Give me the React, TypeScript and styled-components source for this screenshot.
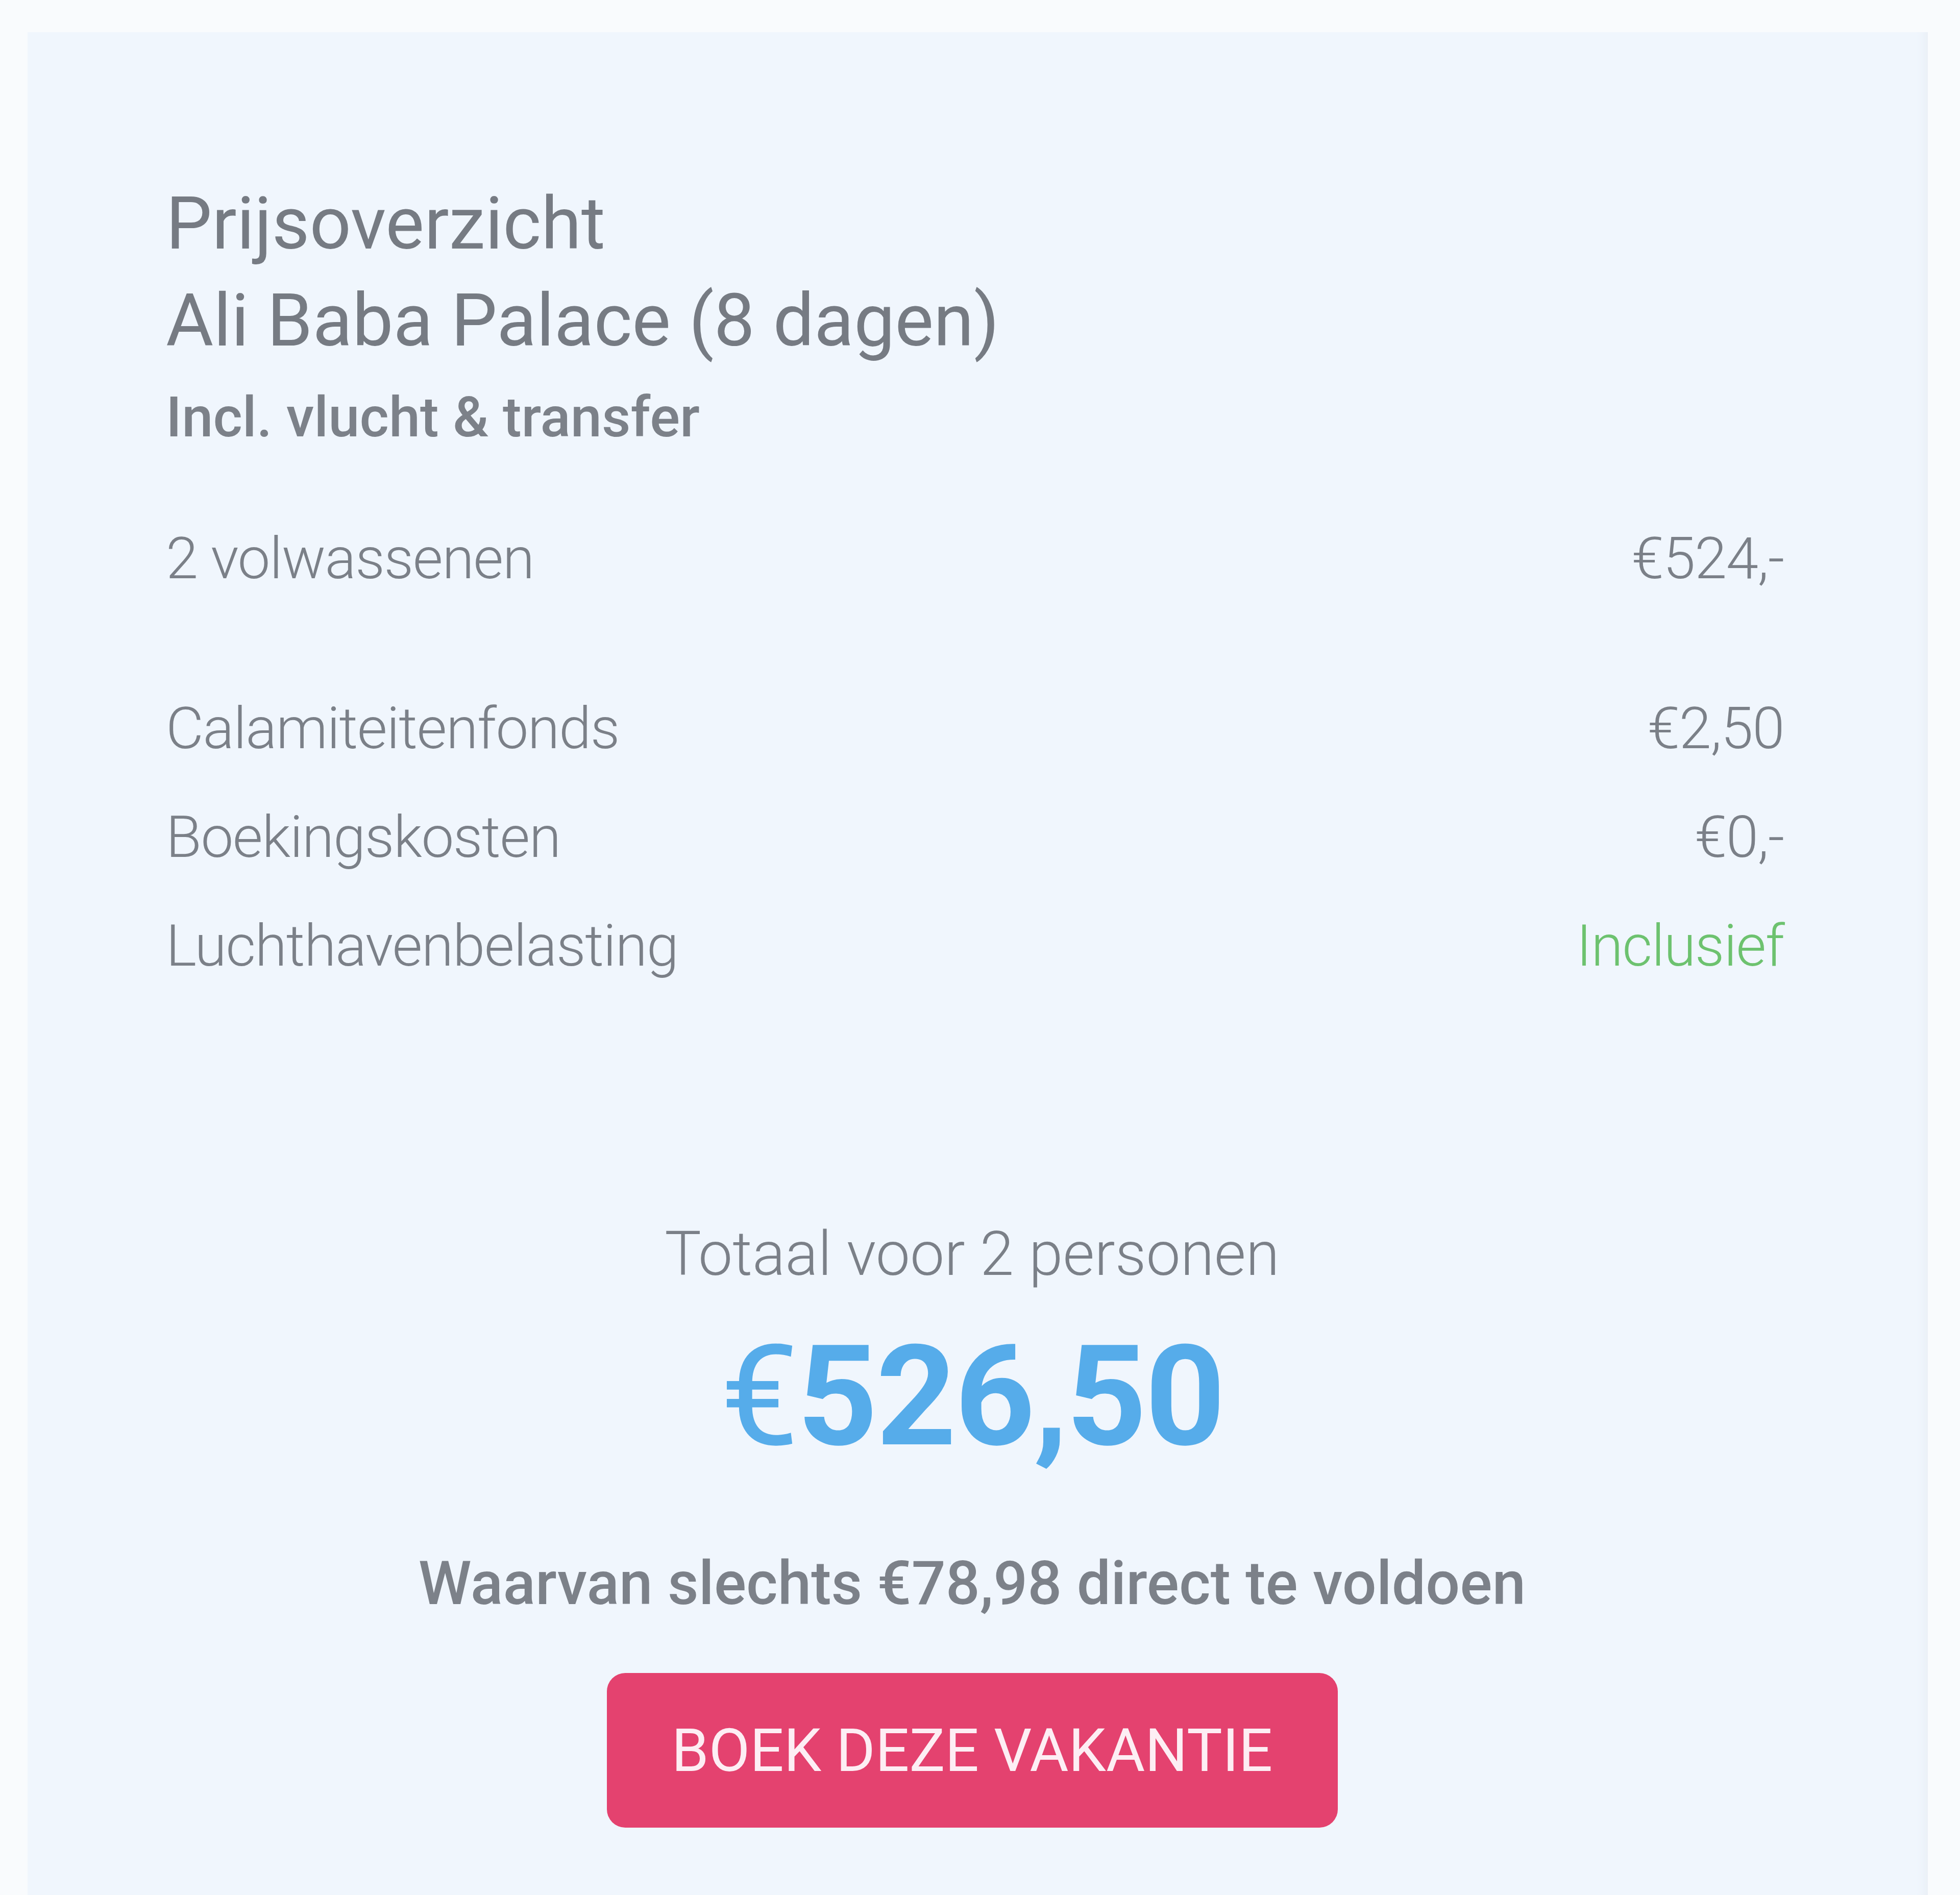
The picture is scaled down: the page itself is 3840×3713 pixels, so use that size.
import styled, { createGlobalStyle } from "styled-components";

const GlobalStyle = createGlobalStyle`
    html, body {
        margin: 0;
        padding: 0;
        background: #f9fbfd;
    }
    body {
        font-family: Roboto, "Liberation Sans", sans-serif;
    }
`;

const Page = styled.div`
    width: 3840px;
    height: 3713px;
    overflow: hidden;
    padding-top: 63px;
    padding-left: 54px;
    box-sizing: border-box;
`;

const Panel = styled.section`
    width: 3723px;
    min-height: 3650px;
    box-sizing: border-box;
    padding: 280px 282px 0 271px;
    background: #f0f6fd;
    box-shadow: inset -22px 0 18px -16px #e9eef4;
    color: #7b8088;
`;

const Title = styled.h2`
    margin: 0;
    font-size: 143px;
    line-height: 190px;
    font-weight: 400;
    color: #767b83;
`;

const SubTitle = styled.p`
    margin: 26px 0 0;
    font-size: 110px;
    line-height: 137px;
    font-weight: 500;
    color: #7c8189;
`;

const PriceList = styled.div`
    margin-top: 102px;
    display: flex;
    flex-direction: column;
`;

const Row = styled.div<{ $spaced?: boolean }>`
    display: flex;
    justify-content: space-between;
    font-size: 114px;
    line-height: 213px;
    font-weight: 300;
    letter-spacing: -1.5px;
    margin-bottom: ${(p) => (p.$spaced ? "120px" : "0")};
`;

const Amount = styled.span<{ $included?: boolean }>`
    color: ${(p) => (p.$included ? "#6dc26f" : "#7b8088")};
`;

const Summary = styled.div`
    margin-top: 430px;
    display: flex;
    flex-direction: column;
    align-items: center;
    margin-left: -11px;
`;

const TotalLabel = styled.div`
    font-size: 120px;
    line-height: 134px;
    font-weight: 300;
    color: #7b8088;
`;

const TotalPrice = styled.div`
    margin-top: 80px;
    font-size: 274px;
    line-height: 265px;
    font-weight: 700;
    color: #56acea;
    letter-spacing: -3px;
`;

const Euro = styled.span`
    font-weight: 400;
`;

const PayNow = styled.div`
    margin-top: 174px;
    font-size: 118px;
    line-height: 120px;
    font-weight: 500;
    color: #7c8189;
`;

const BookButton = styled.button`
    margin-top: 115px;
    width: 1432px;
    height: 303px;
    border: none;
    border-radius: 36px;
    background: #e4426f;
    color: #fdeef4;
    font-family: Roboto, "Liberation Sans", sans-serif;
    font-size: 117px;
    font-weight: 400;
    cursor: pointer;
`;

const rows = [
    { label: "2 volwassenen", amount: "€524,-", spaced: true },
    { label: "Calamiteitenfonds", amount: "€2,50" },
    { label: "Boekingskosten", amount: "€0,-" },
    { label: "Luchthavenbelasting", amount: "Inclusief", included: true },
];

export default function App() {
    return (
        <Page>
            <GlobalStyle />
            <Panel>
                <Title>
                    Prijsoverzicht
                    <br />
                    Ali Baba Palace (8 dagen)
                </Title>
                <SubTitle>Incl. vlucht &amp; transfer</SubTitle>

                <PriceList>
                    {rows.map((row) => (
                        <Row key={row.label} $spaced={row.spaced}>
                            <span>{row.label}</span>
                            <Amount $included={row.included}>{row.amount}</Amount>
                        </Row>
                    ))}
                </PriceList>

                <Summary>
                    <TotalLabel>Totaal voor 2 personen</TotalLabel>
                    <TotalPrice>
                        <Euro>€</Euro>526,50
                    </TotalPrice>
                    <PayNow>Waarvan slechts €78,98 direct te voldoen</PayNow>
                    <BookButton>BOEK DEZE VAKANTIE</BookButton>
                </Summary>
            </Panel>
        </Page>
    );
}
